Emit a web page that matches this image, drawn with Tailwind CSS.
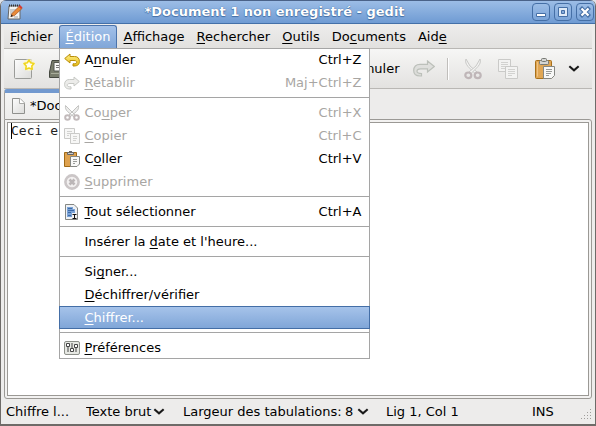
<!DOCTYPE html>
<html lang="fr">
<head>
<meta charset="utf-8">
<meta name="viewport" content="width=device-width, initial-scale=1">
<title>*Document 1 non enregistré - gedit</title>
<script src="https://cdn.jsdelivr.net/npm/@tailwindcss/browser@4"></script>
</head>
<body class="bg-[#dfe3ea]">
<svg class="absolute size-0" aria-hidden="true">
  <defs>
    <linearGradient id="gold" x1="0" y1="0" x2="0" y2="1"><stop offset="0" stop-color="#fff08a"/><stop offset="1" stop-color="#e8bc14"/></linearGradient>
    <linearGradient id="paper" x1="0" y1="0" x2="1" y2="1"><stop offset="0" stop-color="#fdfdfd"/><stop offset="1" stop-color="#dcdcda"/></linearGradient>
    <symbol id="redo" viewBox="0 0 22 17">
      <path d="M14.500 1 L21.300 6.500 L14.500 12 V8.800 H7.500 C5 8.800 4 10 4 11.300 C4 12.800 5.500 13.500 8.500 13.500 V16 H7 C2.800 16 .700 13.700 .700 10.500 C.700 6.500 3 4.300 7 4.300 H14.500 Z" fill="currentColor" fill-opacity=".3" stroke="currentColor" stroke-width="1.200"/>
    </symbol>
    <symbol id="cut" viewBox="0 0 18 22">
      <path d="M2 1 C1 4 2 6 4 8.500 L11 15.500 L13 14 L6 8 Z" fill="#f2f2f1" stroke="#c9c9c7"/>
      <path d="M16 1 C17 4 16 6 14 8.500 L7 15.500 L5 14 L12 8 Z" fill="#f2f2f1" stroke="#c9c9c7"/>
      <ellipse cx="4.300" cy="17.300" rx="3" ry="2.800" fill="none" stroke="#bfb6b8" stroke-width="2.200"/>
      <ellipse cx="13.700" cy="17.300" rx="3" ry="2.800" fill="none" stroke="#bfb6b8" stroke-width="2.200"/>
    </symbol>
    <symbol id="copy" viewBox="0 0 22 22">
      <path d="M1.500 1.500 H13.500 V13.500 H1.500 Z" fill="#f3f3f2" stroke="#cacac8"/>
      <path d="M4 4.500 H11 M4 6.500 H11 M4 8.500 H11 M4 10.500 H8" stroke="#d2d2d0" fill="none"/>
      <path d="M8.500 8.500 H20.500 V20.500 H8.500 Z" fill="#f3f3f2" stroke="#cacac8"/>
      <path d="M11 11.500 H18 M11 13.500 H18 M11 15.500 H18 M11 17.500 H15" stroke="#d2d2d0" fill="none"/>
    </symbol>
    <symbol id="paste" viewBox="0 0 22 22">
      <rect x="1.500" y="2.500" width="16" height="18" rx="1" fill="#e0a654" stroke="#a8701a"/>
      <path d="M3.500 4 V18.500" stroke="#efc383"/>
      <rect x="5.500" y="2.500" width="9" height="4" rx="1" fill="#d5d6d3" stroke="#777974"/>
      <rect x="7.500" y=".500" width="5" height="3" rx="1" fill="#d5d6d3" stroke="#777974"/>
      <path d="M9.500 8.500 H20.500 V17.500 L17.500 20.500 H9.500 Z" fill="#f8f8f7" stroke="#858783"/>
      <path d="M12 11.500 H18 M12 13.500 H18 M12 15.500 H17 M12 17.500 H15" stroke="#999b98" fill="none"/>
    </symbol>
    <symbol id="chevron" viewBox="0 0 10 6"><path d="M1 1 L5 4.500 L9 1" fill="none" stroke="#1a1a1a" stroke-width="1.800"/></symbol>
  </defs>
</svg>
<div class="flex h-screen min-h-[426px] flex-col overflow-hidden rounded-t-[6px] border-x border-b-2 border-[#6e6b68] bg-[#edeceb] font-['DejaVu_Sans',sans-serif] text-[13px] leading-4 text-black">

  <header class="flex h-6 shrink-0 items-center border-y border-t-[#4a6288] border-b-[#4470a8] bg-linear-to-b from-[#9cbde6] to-[#6f9bd3] pr-px pl-1.5">
    <svg class="size-4" viewBox="0 0 16 16" aria-hidden="true">
      <path d="M2 2 H13 V15 H1 Z" fill="#f4f4f2" stroke="#666"/>
      <path d="M2 1.500 H13" stroke="#333" stroke-dasharray="1 1" stroke-width="2"/>
      <path d="M3 6 H9 M3 8 H7 M3 10 H6 M7 13 H11" stroke="#a5a5a5"/>
      <path d="M4 12.500 L5 9.500 L12.500 2 L15 4.500 L7.500 11.500 Z" fill="#e98a37" stroke="#a5521c" stroke-width=".7"/>
      <path d="M11.500 2.500 L13 1 L15.500 3.500 L14 5 Z" fill="#d33b35"/>
      <path d="M3.500 13 L4.500 10.500 L6 12 Z" fill="#222"/>
    </svg>
    <h1 class="grow pr-1.5 text-center text-[13px] font-bold text-white [text-shadow:0_0_1px_#2c5488,0_1px_1px_#4672aa]">*Document 1 non enregistré - gedit</h1>
    <div class="flex gap-1">
      <button aria-label="Réduire" class="flex size-[18px] items-center justify-center rounded-[4px] border border-[#456fa6] bg-linear-to-b from-[#9cbde6] to-[#7ba4d8]">
        <svg class="size-4" viewBox="0 0 16 16"><path d="M3.500 9.500 H12.500 V12.500 H3.500 Z" fill="#fff" stroke="#456fa6"/></svg>
      </button>
      <button aria-label="Agrandir" class="flex size-[18px] items-center justify-center rounded-[4px] border border-[#456fa6] bg-linear-to-b from-[#9cbde6] to-[#7ba4d8]">
        <svg class="size-4" viewBox="0 0 16 16"><path d="M3.500 3.500 H12.500 V12.500 H3.500 Z" fill="#dfeaf7" stroke="#456fa6"/><path d="M6.500 6.500 H9.500 V9.500 H6.500 Z" fill="#86acdc" stroke="#456fa6"/></svg>
      </button>
      <button aria-label="Fermer" class="flex size-[18px] items-center justify-center rounded-[4px] border border-[#456fa6] bg-linear-to-b from-[#9cbde6] to-[#7ba4d8]">
        <svg class="size-4" viewBox="0 0 16 16"><path d="M5 5 L11 11 M11 5 L5 11" stroke="#456fa6" stroke-width="4.200" stroke-linecap="square"/><path d="M4.500 4.500 L11.500 11.500 M11.500 4.500 L4.500 11.500" stroke="#fff" stroke-width="2.300"/></svg>
      </button>
    </div>
  </header>

  <nav class="relative z-10 mx-[3px] flex h-[25px] shrink-0 items-stretch border-b border-[#b9b7b4] bg-linear-to-b from-[#eeedec] to-[#e2e1df] pt-px [&_u]:underline-offset-2 [&_u]:[text-decoration-skip-ink:none]">
    <button class="px-1.5"><u>F</u>ichier</button>
    <div class="relative flex">
      <button aria-expanded="true" class="rounded-t-[3px] border border-b-0 border-[#4a73ab] bg-linear-to-b from-[#a3c1e9] to-[#80a6d8] px-1.5 text-white"><u>É</u>dition</button>
      <ul class="absolute top-[23px] left-0 w-[311px] bg-white shadow-[inset_0_0_0_1px_#a5a5a5]">
        <li><button class="flex h-[23px] w-full items-center gap-[5px] pr-2 pl-[5px] text-left">
          <svg class="size-4" viewBox="0 0 16 16" aria-hidden="true"><path d="M6 2 L.700 6.500 L6 11 V8.500 H10 C12 8.500 12.800 9.200 12.800 10.200 C12.800 11.400 11.500 11.800 9 11.800 V14 H10 C13.800 14 15.400 12.300 15.400 9.500 C15.400 6 13.500 4.500 10.500 4.500 H6 Z" fill="url(#gold)" stroke="#b88d08"/></svg>
          <span class="grow">A<u>n</u>nuler</span><span>Ctrl+Z</span></button></li>
        <li><button disabled class="flex h-[23px] w-full items-center gap-[5px] pr-2 pl-[5px] text-left text-[#a8a6a3]">
          <svg class="size-4" viewBox="0 0 16 16" aria-hidden="true"><path d="M10 2 L15.300 6.500 L10 11 V8.500 H6 C4 8.500 3.200 9.200 3.200 10.200 C3.200 11.400 4.500 11.800 7 11.800 V14 H6 C2.200 14 .600 12.300 .600 9.500 C.600 6 2.500 4.500 5.500 4.500 H10 Z" fill="#ececea" stroke="#c6c8c4"/></svg>
          <span class="grow"><u>R</u>établir</span><span>Maj+Ctrl+Z</span></button></li>
        <li class="py-[3px]"><hr class="border-[#a5a5a5]"></li>
        <li><button disabled class="flex h-[23px] w-full items-center gap-[5px] pr-2 pl-[5px] text-left text-[#a8a6a3]">
          <svg class="size-4" viewBox="0 0 16 16" aria-hidden="true"><path d="M1.500 .500 C1 3 2 5 3.500 6.500 L10 12 L11.500 10.500 Z M14.500 .500 C15 3 14 5 12.500 6.500 L6 12 L4.500 10.500 Z" fill="#ededec" stroke="#c2c2c0"/><circle cx="3.500" cy="12.500" r="2.300" fill="none" stroke="#c2babb" stroke-width="2"/><circle cx="12.500" cy="12.500" r="2.300" fill="none" stroke="#c2babb" stroke-width="2"/></svg>
          <span class="grow">Co<u>u</u>per</span><span>Ctrl+X</span></button></li>
        <li><button disabled class="flex h-[23px] w-full items-center gap-[5px] pr-2 pl-[5px] text-left text-[#a8a6a3]">
          <svg class="size-4" viewBox="0 0 16 16" aria-hidden="true"><path d="M.500 .500 H10.500 V10.500 H.500 Z" fill="#f7f7f6" stroke="#cacac8"/><path d="M3 3.500 H8 M3 5.500 H8 M3 7.500 H5" stroke="#d2d2d0"/><path d="M6.500 5.500 H15.500 V15.500 H6.500 Z" fill="#f7f7f6" stroke="#cacac8"/><path d="M9 8.500 H13 M9 10.500 H13 M9 12.500 H12" stroke="#d2d2d0"/></svg>
          <span class="grow"><u>C</u>opier</span><span>Ctrl+C</span></button></li>
        <li><button class="flex h-[23px] w-full items-center gap-[5px] pr-2 pl-[5px] text-left">
          <svg class="size-4" viewBox="0 0 16 16" aria-hidden="true"><path d="M.500 1.500 H12.500 V15.500 H.500 Z" fill="#dfa24f" stroke="#a06a17"/><path d="M3.500 1.500 H9.500 V3.500 H3.500 Z M5 .500 H8" fill="#ccc" stroke="#666"/><path d="M6.500 5.500 H15.500 V13 L13 15.500 H6.500 Z" fill="#f8f8f7" stroke="#858783"/><path d="M9 8.500 H13 M9 10.500 H13 M9 12.500 H11" stroke="#999b98"/></svg>
          <span class="grow">C<u>o</u>ller</span><span>Ctrl+V</span></button></li>
        <li><button disabled class="flex h-[23px] w-full items-center gap-[5px] pr-2 pl-[5px] text-left text-[#a8a6a3]">
          <svg class="size-4" viewBox="0 0 16 16" aria-hidden="true"><circle cx="8" cy="8" r="6.600" fill="#f2f0f0" stroke="#cbc6c7" stroke-width="2.600"/><path d="M5.500 5.500 L10.500 10.500 M10.500 5.500 L5.500 10.500" stroke="#bbb6b7" stroke-width="2.600"/></svg>
          <span class="grow"><u>S</u>upprimer</span></button></li>
        <li class="py-[3px]"><hr class="border-[#a5a5a5]"></li>
        <li><button class="flex h-[23px] w-full items-center gap-[5px] pr-2 pl-[5px] text-left">
          <svg class="size-4" viewBox="0 0 16 16" aria-hidden="true"><path d="M1.500 .500 H10 L13.500 4 V15.500 H1.500 Z" fill="#eef1f5" stroke="#858783"/><path d="M3 3 H9 V5 H11 V13 H3 Z" fill="#7ba3d6"/><path d="M4 4.500 H8 M4 6.500 H10 M4 8.500 H7 M4 11.500 H7" stroke="#3e6ba8"/><path d="M8 9 H13 V15 H8 Z" fill="#f5f5f5"/><path d="M8.500 10.500 H12.500 M8.500 14.500 H12.500 M10.500 10.500 V14.500" stroke="#111"/></svg>
          <span class="grow"><u>T</u>out sélectionner</span><span>Ctrl+A</span></button></li>
        <li class="py-[3px]"><hr class="border-[#a5a5a5]"></li>
        <li><button class="flex h-[23px] w-full items-center pl-[26px] text-left"><span>Insérer la <u>d</u>ate et l'heure...</span></button></li>
        <li class="py-[3px]"><hr class="border-[#a5a5a5]"></li>
        <li><button class="flex h-[23px] w-full items-center pl-[26px] text-left"><span>Si<u>g</u>ner...</span></button></li>
        <li><button class="flex h-[23px] w-full items-center pl-[26px] text-left"><span><u>D</u>échiffrer/vérifier</span></button></li>
        <li><button class="flex h-[23px] w-full items-center border border-[#446ea6] bg-linear-to-b from-[#a6c3ea] to-[#80a6d8] pl-[25px] text-left text-white"><span><u>C</u>hiffrer...</span></button></li>
        <li class="py-[3px]"><hr class="border-[#a5a5a5]"></li>
        <li><button class="flex h-[23px] w-full items-center gap-[5px] pr-2 pl-[5px] text-left">
          <svg class="size-4" viewBox="0 0 16 16" aria-hidden="true"><rect x=".500" y="1.500" width="15" height="13" rx="1.500" fill="#e6e8e3" stroke="#8d908a"/><path d="M4 6 V12 M8 3 V8 M12 7 V12" stroke="#444" stroke-width="1"/><path d="M2.500 3.500 H5.500 V6.500 H2.500 Z M6.500 8.500 H9.500 V11.500 H6.500 Z M10.500 4.500 H13.500 V7.500 H10.500 Z" fill="#fff" stroke="#444"/></svg>
          <span><u>P</u>références</span></button></li>
      </ul>
    </div>
    <button class="px-1.5"><u>A</u>ffichage</button>
    <button class="px-1.5"><u>R</u>echercher</button>
    <button class="px-1.5"><u>O</u>utils</button>
    <button class="px-1.5">Do<u>c</u>uments</button>
    <button class="px-1.5">Aid<u>e</u></button>
  </nav>

  <div role="toolbar" class="mx-[3px] flex h-10 shrink-0 items-center border-b border-[#b9b7b4] bg-linear-to-b from-[#f6f6f5] to-[#e3e2e0] pl-[9px]">
    <button aria-label="Nouveau">
      <svg class="size-[22px]" viewBox="0 0 22 22"><rect x="1.500" y="1.500" width="17" height="19" rx="1" fill="url(#paper)" stroke="#9b9c99"/><circle cx="16" cy="7" r="6" fill="#fff9c2" opacity=".7"/><path d="M16 2 L17.700 4.800 L21 5.500 L18.800 8 L19.200 11.300 L16 10 L12.800 11.300 L13.200 8 L11 5.500 L14.300 4.800 Z" fill="#fffef0" stroke="#f0d51d" stroke-width="1.600" stroke-linejoin="round"/></svg>
    </button>
    <button aria-label="Ouvrir" class="ml-3.5">
      <svg class="size-[22px]" viewBox="0 0 22 22"><path d="M3 2.500 H19 L20.500 14 V19.500 H.500 V14 Z" fill="#797d6c" stroke="#454840"/><path d="M5 4.500 H17 V13 H5 Z" fill="#fafaf8" stroke="#555850"/><path d="M7 7.500 H15 M7 9.500 H15" stroke="#777"/><path d="M2 15.500 H19" stroke="#a9ad9b"/></svg>
    </button>
    <button class="ml-[278px]">Annuler</button>
    <button aria-label="Rétablir" disabled class="ml-[13px]"><svg class="h-[17px] w-[22px] text-[#bcc0ba]"><use href="#redo"/></svg></button>
    <div class="ml-3 h-[22px] w-[2px] border-l border-[#c0bebb] bg-white"></div>
    <button aria-label="Couper" disabled class="ml-[15px]"><svg class="h-[22px] w-[18px]"><use href="#cut"/></svg></button>
    <button aria-label="Copier" disabled class="ml-[15px]"><svg class="size-[22px]"><use href="#copy"/></svg></button>
    <button aria-label="Coller" class="ml-[15px]"><svg class="size-[22px]"><use href="#paste"/></svg></button>
    <button aria-label="Plus" class="ml-3"><svg class="h-[7px] w-3"><use href="#chevron"/></svg></button>
  </div>

  <main class="mx-[3px] flex min-h-0 grow flex-col">
    <div role="tablist" class="flex h-[30px] shrink-0">
      <button role="tab" aria-selected="true" class="flex w-56 items-center gap-1 rounded-t-[3px] border border-t-[4px] border-b-0 border-[#a3a19e] border-t-[#7299cf] bg-linear-to-b from-[#f5f5f4] to-[#edeceb] pl-1.5">
        <svg class="h-4 w-[15px]" viewBox="0 0 15 16" aria-hidden="true"><path d="M1.500 .500 H9 L13.500 5 V15.500 H1.500 Z" fill="url(#paper)" stroke="#90918e"/><path d="M8.500 .500 V5.500 H13.500" fill="#fff" stroke="#a9aaa7"/></svg>
        <span>*Document 1</span>
      </button>
    </div>
    <div class="flex min-h-0 grow rounded-b-[3px] rounded-tr-[3px] border border-[#9b9995] bg-[#f3f2f1] p-[2px]">
      <div class="relative flex grow border border-[#9b9995] bg-white">
        <textarea aria-label="Texte du document" spellcheck="false" class="w-full grow resize-none pl-[3px] font-['DejaVu_Sans_Mono',monospace] text-[13px] leading-4 text-[#222] outline-none">Ceci e</textarea>
        <span class="absolute top-0 left-[3px] h-4 w-px bg-black"></span>
      </div>
    </div>
  </main>

  <footer class="mx-[3px] flex h-[25px] shrink-0 items-center pl-[2px]">
    <span class="w-20">Chiffre l...</span>
    <label class="relative flex w-[97px] items-center">
      <select aria-label="Mode de coloration" class="w-20 appearance-none bg-transparent outline-none"><option>Texte brut</option></select>
      <svg class="pointer-events-none absolute left-[67px] h-[7px] w-3"><use href="#chevron"/></svg>
    </label>
    <div class="flex w-[203px] items-center">
      <label for="tabs" class="w-[162px]">Largeur des tabulations:</label>
      <span class="relative flex items-center">
        <select id="tabs" class="w-6 appearance-none bg-transparent outline-none"><option>8</option></select>
        <svg class="pointer-events-none absolute left-3 h-[7px] w-3"><use href="#chevron"/></svg>
      </span>
    </div>
    <span class="w-[146px]">Lig 1, Col 1</span>
    <span>INS</span>
    <svg class="mt-auto mb-1 ml-auto size-3" viewBox="0 0 12 12" aria-hidden="true"><path d="M10 1.500 H11 M7 4.500 H11 M4 7.500 H11 M1 10.500 H11" stroke="#a09e9b" stroke-dasharray="1 2"/></svg>
  </footer>
</div>
</body>
</html>
